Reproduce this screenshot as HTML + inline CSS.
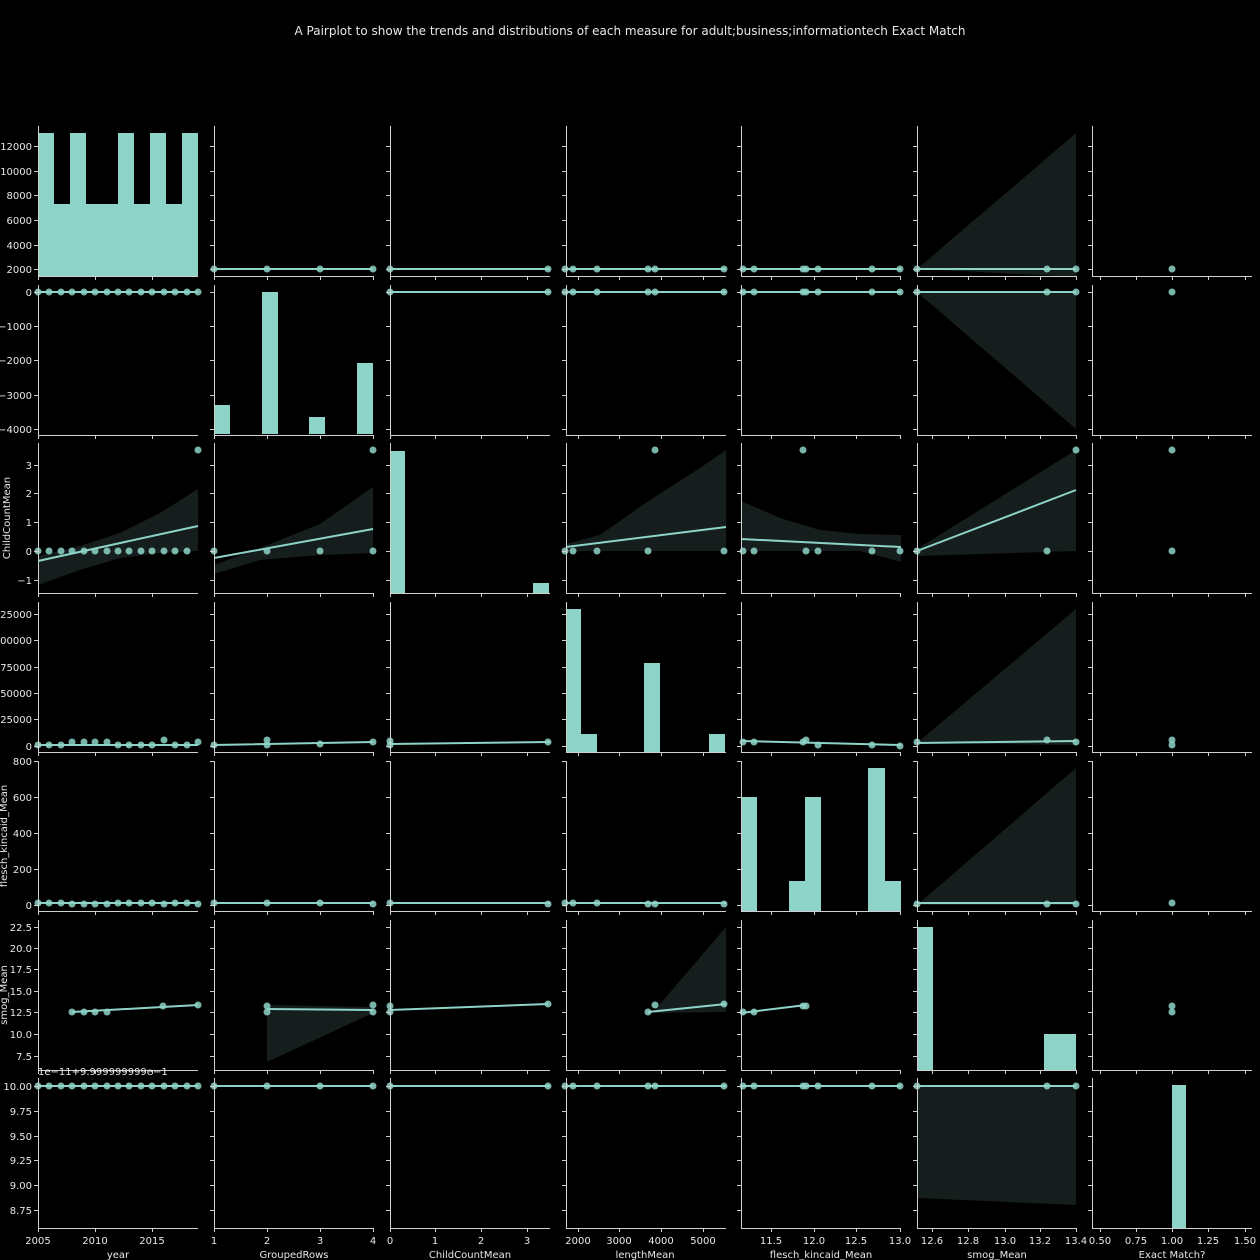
<!DOCTYPE html>
<html><head><meta charset="utf-8"><style>
html,body{margin:0;padding:0;background:#000;}
svg{display:block;}
text{font-family:"DejaVu Sans","Liberation Sans",sans-serif;fill:#e8e8e8;font-size:10px;}
</style></head><body>
<svg width="1260" height="1260" viewBox="0 0 1260 1260" xmlns="http://www.w3.org/2000/svg">
<rect width="1260" height="1260" fill="#000"/>
<defs>
<path id="frame" d="M38.5 126V276.5H198" fill="none" stroke="#d0d0d0" stroke-width="1"/>
<g id="yt0" stroke="#d0d0d0"><path d="M34 146.5h4M34 171.5h4M34 195.5h4M34 220.5h4M34 245.5h4M34 269.5h4"/></g>
<g id="yt1" stroke="#d0d0d0"><path d="M34 292.5h4M34 326.5h4M34 360.5h4M34 395.5h4M34 429.5h4"/></g>
<g id="yt2" stroke="#d0d0d0"><path d="M34 465.5h4M34 493.5h4M34 522.5h4M34 551.5h4M34 580.5h4"/></g>
<g id="yt3" stroke="#d0d0d0"><path d="M34 614.5h4M34 640.5h4M34 667.5h4M34 693.5h4M34 719.5h4M34 746.5h4"/></g>
<g id="yt4" stroke="#d0d0d0"><path d="M34 761.5h4M34 797.5h4M34 833.5h4M34 869.5h4M34 905.5h4"/></g>
<g id="yt5" stroke="#d0d0d0"><path d="M34 927.5h4M34 948.5h4M34 969.5h4M34 991.5h4M34 1012.5h4M34 1034.5h4M34 1056.5h4"/></g>
<g id="yt6" stroke="#d0d0d0"><path d="M34 1086.5h4M34 1111.5h4M34 1136.5h4M34 1160.5h4M34 1185.5h4M34 1210.5h4"/></g>
<g id="xt" stroke="#d0d0d0"><path d="M38.5 276v4M95.5 276v4M152.5 276v4M214.5 276v4M267.5 276v4M320.5 276v4M373.5 276v4M390.5 276v4M435.5 276v4M481.5 276v4M527.5 276v4M578.5 276v4M619.5 276v4M661.5 276v4M703.5 276v4M771.5 276v4M814.5 276v4M856.5 276v4M900.5 276v4M932.5 276v4M968.5 276v4M1005.5 276v4M1040.5 276v4M1076.5 276v4M1100.5 276v4M1136.5 276v4M1172.5 276v4M1208.5 276v4M1245.5 276v4"/></g>
</defs>

<text x="630" y="35" text-anchor="middle" style="font-size:12px">A Pairplot to show the trends and distributions of each measure for adult;business;informationtech Exact Match</text>

<!-- bands -->
<g fill="#161e1d">
<polygon points="917,269 1076,133 1076,276 1060,276"/>
<polygon points="917,292 1076,292 1076,429"/>
<polygon points="38,556 80,546 120,533 160,513 198,489 198,551 160,553 120,558 80,570 38,585"/>
<polygon points="214,565 260,548 320,524 373,487 373,553 320,555 260,560 214,574"/>
<polygon points="566,544 600,535 650,500 700,468 726,450 726,551 600,551 566,551"/>
<polygon points="741,501 780,518 820,530 860,534 901,535 901,562 860,551 741,551 741,540"/>
<polygon points="917,549 1076,450 1076,551 917,556"/>
<polygon points="917,743 1076,609 1076,745"/>
<polygon points="917,905 1076,768 1076,905"/>
<polygon points="267,1005 373,1007 373,1013 267,1062"/>
<polygon points="655,1010 726,927 726,1012 655,1013"/>
<polygon points="917,1086 1076,1086 1076,1205 917,1198"/>
</g>

<!-- histograms -->
<g fill="#8dd3c7">
<path d="M38 276V133H54V204H70V133H86V204H118V133H134V204H150V133H166V204H182V133H198V276Z"/>
<rect x="214" y="405" width="16" height="29"/><rect x="262" y="292" width="16" height="142"/><rect x="309" y="417" width="16" height="17"/><rect x="357" y="363" width="16" height="71"/>
<rect x="390" y="451" width="15" height="142"/><rect x="533" y="583" width="16" height="10"/>
<rect x="566" y="609" width="15" height="143"/><rect x="581" y="734" width="16" height="18"/><rect x="644" y="663" width="16" height="89"/><rect x="709" y="734" width="16" height="18"/>
<rect x="741" y="797" width="16" height="114"/><rect x="789" y="881" width="16" height="30"/><rect x="805" y="797" width="16" height="114"/><rect x="868" y="768" width="17" height="143"/><rect x="885" y="881" width="16" height="30"/>
<rect x="917" y="927" width="16" height="143"/><rect x="1044" y="1034" width="32" height="36"/>
<rect x="1172" y="1085" width="14" height="143"/>
</g>

<!-- regression lines -->
<g stroke="#8dd3c7" stroke-width="2" fill="none">
<path d="M214 269H373M390 269H550M566 269H726M741 269H901M917 269H1076"/>
<path d="M38 292H198M390 292H550M566 292H726M741 292H901M917 292H1076"/>
<path d="M38 561L198 526M214 558L373 529M566 547L726 527M741 539L901 547M917 551L1076 490"/>
<path d="M38 745H198M214 745L373 742M390 744L550 742M917 743L1076 741M741 741L901 745"/>
<path d="M38 903H198M214 903H373M390 903H550M566 903H726M917 903H1076"/>
<path d="M72 1012L198 1005M267 1009L373 1010M390 1010L548 1004M648 1012L726 1004M741 1013L806 1005"/>
<path d="M38 1086H198M214 1086H373M390 1086H550M566 1086H726M741 1086H901M917 1086H1076"/>
</g>

<!-- scatter points -->
<g fill="#8dd3c7" fill-opacity="0.85">
<circle cx="214" cy="269" r="3.5"/><circle cx="267" cy="269" r="3.5"/><circle cx="320" cy="269" r="3.5"/><circle cx="373" cy="269" r="3.5"/>
<circle cx="390" cy="269" r="3.5"/><circle cx="548" cy="269" r="3.5"/>
<circle cx="565" cy="269" r="3.5"/><circle cx="573" cy="269" r="3.5"/><circle cx="597" cy="269" r="3.5"/><circle cx="648" cy="269" r="3.5"/><circle cx="655" cy="269" r="3.5"/><circle cx="724" cy="269" r="3.5"/>
<circle cx="743" cy="269" r="3.5"/><circle cx="754" cy="269" r="3.5"/><circle cx="803" cy="269" r="3.5"/><circle cx="806" cy="269" r="3.5"/><circle cx="818" cy="269" r="3.5"/><circle cx="872" cy="269" r="3.5"/><circle cx="900" cy="269" r="3.5"/>
<circle cx="917" cy="269" r="3.5"/><circle cx="1047" cy="269" r="3.5"/><circle cx="1076" cy="269" r="3.5"/><circle cx="1172" cy="269" r="3.5"/>
<circle cx="38" cy="292" r="3.5"/><circle cx="49" cy="292" r="3.5"/><circle cx="61" cy="292" r="3.5"/><circle cx="72" cy="292" r="3.5"/><circle cx="84" cy="292" r="3.5"/><circle cx="95" cy="292" r="3.5"/><circle cx="107" cy="292" r="3.5"/><circle cx="118" cy="292" r="3.5"/><circle cx="129" cy="292" r="3.5"/><circle cx="141" cy="292" r="3.5"/><circle cx="152" cy="292" r="3.5"/><circle cx="164" cy="292" r="3.5"/><circle cx="175" cy="292" r="3.5"/><circle cx="187" cy="292" r="3.5"/><circle cx="198" cy="292" r="3.5"/>
<circle cx="390" cy="292" r="3.5"/><circle cx="548" cy="292" r="3.5"/>
<circle cx="565" cy="292" r="3.5"/><circle cx="573" cy="292" r="3.5"/><circle cx="597" cy="292" r="3.5"/><circle cx="648" cy="292" r="3.5"/><circle cx="655" cy="292" r="3.5"/><circle cx="724" cy="292" r="3.5"/>
<circle cx="743" cy="292" r="3.5"/><circle cx="754" cy="292" r="3.5"/><circle cx="803" cy="292" r="3.5"/><circle cx="806" cy="292" r="3.5"/><circle cx="818" cy="292" r="3.5"/><circle cx="872" cy="292" r="3.5"/><circle cx="900" cy="292" r="3.5"/>
<circle cx="917" cy="292" r="3.5"/><circle cx="1047" cy="292" r="3.5"/><circle cx="1076" cy="292" r="3.5"/><circle cx="1172" cy="292" r="3.5"/>
<circle cx="38" cy="551" r="3.5"/><circle cx="49" cy="551" r="3.5"/><circle cx="61" cy="551" r="3.5"/><circle cx="72" cy="551" r="3.5"/><circle cx="84" cy="551" r="3.5"/><circle cx="95" cy="551" r="3.5"/><circle cx="107" cy="551" r="3.5"/><circle cx="118" cy="551" r="3.5"/><circle cx="129" cy="551" r="3.5"/><circle cx="141" cy="551" r="3.5"/><circle cx="152" cy="551" r="3.5"/><circle cx="164" cy="551" r="3.5"/><circle cx="175" cy="551" r="3.5"/><circle cx="187" cy="551" r="3.5"/><circle cx="198" cy="450" r="3.5"/>
<circle cx="214" cy="551" r="3.5"/><circle cx="267" cy="551" r="3.5"/><circle cx="320" cy="551" r="3.5"/><circle cx="373" cy="551" r="3.5"/><circle cx="373" cy="450" r="3.5"/>
<circle cx="565" cy="551" r="3.5"/><circle cx="573" cy="551" r="3.5"/><circle cx="597" cy="551" r="3.5"/><circle cx="648" cy="551" r="3.5"/><circle cx="655" cy="450" r="3.5"/><circle cx="724" cy="551" r="3.5"/>
<circle cx="743" cy="551" r="3.5"/><circle cx="754" cy="551" r="3.5"/><circle cx="803" cy="450" r="3.5"/><circle cx="806" cy="551" r="3.5"/><circle cx="818" cy="551" r="3.5"/><circle cx="872" cy="551" r="3.5"/><circle cx="900" cy="551" r="3.5"/>
<circle cx="917" cy="551" r="3.5"/><circle cx="1047" cy="551" r="3.5"/><circle cx="1076" cy="450" r="3.5"/><circle cx="1172" cy="551" r="3.5"/><circle cx="1172" cy="450" r="3.5"/>
<circle cx="38" cy="745" r="3.5"/><circle cx="49" cy="745" r="3.5"/><circle cx="61" cy="745" r="3.5"/><circle cx="72" cy="742" r="3.5"/><circle cx="84" cy="742" r="3.5"/><circle cx="95" cy="742" r="3.5"/><circle cx="107" cy="742" r="3.5"/><circle cx="118" cy="745" r="3.5"/><circle cx="129" cy="745" r="3.5"/><circle cx="141" cy="745" r="3.5"/><circle cx="152" cy="745" r="3.5"/><circle cx="164" cy="740" r="3.5"/><circle cx="175" cy="745" r="3.5"/><circle cx="187" cy="745" r="3.5"/><circle cx="198" cy="742" r="3.5"/>
<circle cx="214" cy="745" r="3.5"/><circle cx="267" cy="740" r="3.5"/><circle cx="267" cy="745" r="3.5"/><circle cx="320" cy="744" r="3.5"/><circle cx="373" cy="742" r="3.5"/>
<circle cx="390" cy="741" r="3.5"/><circle cx="390" cy="745" r="3.5"/><circle cx="548" cy="742" r="3.5"/>
<circle cx="743" cy="742" r="3.5"/><circle cx="754" cy="742" r="3.5"/><circle cx="803" cy="742" r="3.5"/><circle cx="806" cy="740" r="3.5"/><circle cx="818" cy="745" r="3.5"/><circle cx="872" cy="745" r="3.5"/><circle cx="900" cy="746" r="3.5"/>
<circle cx="917" cy="742" r="3.5"/><circle cx="1047" cy="740" r="3.5"/><circle cx="1076" cy="742" r="3.5"/><circle cx="1172" cy="740" r="3.5"/><circle cx="1172" cy="745" r="3.5"/>
<circle cx="38" cy="903" r="3.5"/><circle cx="49" cy="903" r="3.5"/><circle cx="61" cy="903" r="3.5"/><circle cx="72" cy="904" r="3.5"/><circle cx="84" cy="904" r="3.5"/><circle cx="95" cy="904" r="3.5"/><circle cx="107" cy="904" r="3.5"/><circle cx="118" cy="903" r="3.5"/><circle cx="129" cy="903" r="3.5"/><circle cx="141" cy="903" r="3.5"/><circle cx="152" cy="903" r="3.5"/><circle cx="164" cy="904" r="3.5"/><circle cx="175" cy="903" r="3.5"/><circle cx="187" cy="903" r="3.5"/><circle cx="198" cy="904" r="3.5"/>
<circle cx="214" cy="903" r="3.5"/><circle cx="267" cy="903" r="3.5"/><circle cx="320" cy="903" r="3.5"/><circle cx="373" cy="904" r="3.5"/>
<circle cx="390" cy="903" r="3.5"/><circle cx="548" cy="904" r="3.5"/>
<circle cx="565" cy="903" r="3.5"/><circle cx="573" cy="903" r="3.5"/><circle cx="597" cy="903" r="3.5"/><circle cx="648" cy="904" r="3.5"/><circle cx="655" cy="904" r="3.5"/><circle cx="724" cy="904" r="3.5"/>
<circle cx="917" cy="904" r="3.5"/><circle cx="1047" cy="904" r="3.5"/><circle cx="1076" cy="904" r="3.5"/><circle cx="1172" cy="903" r="3.5"/>
<circle cx="72" cy="1012" r="3.5"/><circle cx="84" cy="1012" r="3.5"/><circle cx="95" cy="1012" r="3.5"/><circle cx="107" cy="1012" r="3.5"/><circle cx="163" cy="1006" r="3.5"/><circle cx="198" cy="1005" r="3.5"/>
<circle cx="267" cy="1006" r="3.5"/><circle cx="267" cy="1012" r="3.5"/><circle cx="373" cy="1005" r="3.5"/><circle cx="373" cy="1012" r="3.5"/>
<circle cx="390" cy="1006" r="3.5"/><circle cx="390" cy="1012" r="3.5"/><circle cx="548" cy="1004" r="3.5"/>
<circle cx="648" cy="1012" r="3.5"/><circle cx="655" cy="1005" r="3.5"/><circle cx="724" cy="1004" r="3.5"/>
<circle cx="743" cy="1012" r="3.5"/><circle cx="754" cy="1012" r="3.5"/><circle cx="803" cy="1006" r="3.5"/><circle cx="806" cy="1006" r="3.5"/>
<circle cx="1172" cy="1006" r="3.5"/><circle cx="1172" cy="1012" r="3.5"/>
<circle cx="38" cy="1086" r="3.5"/><circle cx="49" cy="1086" r="3.5"/><circle cx="61" cy="1086" r="3.5"/><circle cx="72" cy="1086" r="3.5"/><circle cx="84" cy="1086" r="3.5"/><circle cx="95" cy="1086" r="3.5"/><circle cx="107" cy="1086" r="3.5"/><circle cx="118" cy="1086" r="3.5"/><circle cx="129" cy="1086" r="3.5"/><circle cx="141" cy="1086" r="3.5"/><circle cx="152" cy="1086" r="3.5"/><circle cx="164" cy="1086" r="3.5"/><circle cx="175" cy="1086" r="3.5"/><circle cx="187" cy="1086" r="3.5"/><circle cx="198" cy="1086" r="3.5"/>
<circle cx="214" cy="1086" r="3.5"/><circle cx="267" cy="1086" r="3.5"/><circle cx="320" cy="1086" r="3.5"/><circle cx="373" cy="1086" r="3.5"/>
<circle cx="390" cy="1086" r="3.5"/><circle cx="548" cy="1086" r="3.5"/>
<circle cx="565" cy="1086" r="3.5"/><circle cx="573" cy="1086" r="3.5"/><circle cx="597" cy="1086" r="3.5"/><circle cx="648" cy="1086" r="3.5"/><circle cx="655" cy="1086" r="3.5"/><circle cx="724" cy="1086" r="3.5"/>
<circle cx="743" cy="1086" r="3.5"/><circle cx="754" cy="1086" r="3.5"/><circle cx="803" cy="1086" r="3.5"/><circle cx="806" cy="1086" r="3.5"/><circle cx="818" cy="1086" r="3.5"/><circle cx="872" cy="1086" r="3.5"/><circle cx="900" cy="1086" r="3.5"/>
<circle cx="917" cy="1086" r="3.5"/><circle cx="1047" cy="1086" r="3.5"/><circle cx="1076" cy="1086" r="3.5"/>
</g>

<g>
<use href="#frame"/><use href="#frame" x="176"/><use href="#frame" x="352"/><use href="#frame" x="528"/><use href="#frame" x="703"/><use href="#frame" x="879"/><use href="#frame" x="1054"/>
<use href="#frame" y="159"/><use href="#frame" x="176" y="159"/><use href="#frame" x="352" y="159"/><use href="#frame" x="528" y="159"/><use href="#frame" x="703" y="159"/><use href="#frame" x="879" y="159"/><use href="#frame" x="1054" y="159"/>
<use href="#frame" y="317"/><use href="#frame" x="176" y="317"/><use href="#frame" x="352" y="317"/><use href="#frame" x="528" y="317"/><use href="#frame" x="703" y="317"/><use href="#frame" x="879" y="317"/><use href="#frame" x="1054" y="317"/>
<use href="#frame" y="476"/><use href="#frame" x="176" y="476"/><use href="#frame" x="352" y="476"/><use href="#frame" x="528" y="476"/><use href="#frame" x="703" y="476"/><use href="#frame" x="879" y="476"/><use href="#frame" x="1054" y="476"/>
<use href="#frame" y="635"/><use href="#frame" x="176" y="635"/><use href="#frame" x="352" y="635"/><use href="#frame" x="528" y="635"/><use href="#frame" x="703" y="635"/><use href="#frame" x="879" y="635"/><use href="#frame" x="1054" y="635"/>
<use href="#frame" y="794"/><use href="#frame" x="176" y="794"/><use href="#frame" x="352" y="794"/><use href="#frame" x="528" y="794"/><use href="#frame" x="703" y="794"/><use href="#frame" x="879" y="794"/><use href="#frame" x="1054" y="794"/>
<use href="#frame" y="952"/><use href="#frame" x="176" y="952"/><use href="#frame" x="352" y="952"/><use href="#frame" x="528" y="952"/><use href="#frame" x="703" y="952"/><use href="#frame" x="879" y="952"/><use href="#frame" x="1054" y="952"/>
</g>
<path d="M1092.5 276.5H1252M1092.5 435.5H1252M1092.5 593.5H1252M1092.5 752.5H1252M1092.5 911.5H1252M1092.5 1070.5H1252M1092.5 1228.5H1252" stroke="#d0d0d0"/>
<g>
<use href="#xt"/><use href="#xt" y="159"/><use href="#xt" y="317"/><use href="#xt" y="476"/><use href="#xt" y="635"/><use href="#xt" y="794"/><use href="#xt" y="952"/>
</g>
<g>
<use href="#yt0"/><use href="#yt0" x="176"/><use href="#yt0" x="352"/><use href="#yt0" x="528"/><use href="#yt0" x="703"/><use href="#yt0" x="879"/><use href="#yt0" x="1054"/>
<use href="#yt1"/><use href="#yt1" x="176"/><use href="#yt1" x="352"/><use href="#yt1" x="528"/><use href="#yt1" x="703"/><use href="#yt1" x="879"/><use href="#yt1" x="1054"/>
<use href="#yt2"/><use href="#yt2" x="176"/><use href="#yt2" x="352"/><use href="#yt2" x="528"/><use href="#yt2" x="703"/><use href="#yt2" x="879"/><use href="#yt2" x="1054"/>
<use href="#yt3"/><use href="#yt3" x="176"/><use href="#yt3" x="352"/><use href="#yt3" x="528"/><use href="#yt3" x="703"/><use href="#yt3" x="879"/><use href="#yt3" x="1054"/>
<use href="#yt4"/><use href="#yt4" x="176"/><use href="#yt4" x="352"/><use href="#yt4" x="528"/><use href="#yt4" x="703"/><use href="#yt4" x="879"/><use href="#yt4" x="1054"/>
<use href="#yt5"/><use href="#yt5" x="176"/><use href="#yt5" x="352"/><use href="#yt5" x="528"/><use href="#yt5" x="703"/><use href="#yt5" x="879"/><use href="#yt5" x="1054"/>
<use href="#yt6"/><use href="#yt6" x="176"/><use href="#yt6" x="352"/><use href="#yt6" x="528"/><use href="#yt6" x="703"/><use href="#yt6" x="879"/><use href="#yt6" x="1054"/>
</g>

<g text-anchor="end">
<text x="32" y="150">12000</text><text x="32" y="175">10000</text><text x="32" y="199">8000</text><text x="32" y="224">6000</text><text x="32" y="249">4000</text><text x="32" y="273">2000</text>
<text x="32" y="296">0</text><text x="32" y="330">−1000</text><text x="32" y="364">−2000</text><text x="32" y="399">−3000</text><text x="32" y="433">−4000</text>
<text x="32" y="469">3</text><text x="32" y="497">2</text><text x="32" y="526">1</text><text x="32" y="555">0</text><text x="32" y="584">−1</text>
<text x="32" y="618">125000</text><text x="32" y="644">100000</text><text x="32" y="671">75000</text><text x="32" y="697">50000</text><text x="32" y="723">25000</text><text x="32" y="750">0</text>
<text x="32" y="765">800</text><text x="32" y="801">600</text><text x="32" y="837">400</text><text x="32" y="873">200</text><text x="32" y="909">0</text>
<text x="32" y="931">22.5</text><text x="32" y="952">20.0</text><text x="32" y="973">17.5</text><text x="32" y="995">15.0</text><text x="32" y="1016">12.5</text><text x="32" y="1038">10.0</text><text x="32" y="1060">7.5</text>
<text x="32" y="1090">10.00</text><text x="32" y="1115">9.75</text><text x="32" y="1140">9.50</text><text x="32" y="1164">9.25</text><text x="32" y="1189">9.00</text><text x="32" y="1214">8.75</text>
</g>
<text x="38" y="1075">1e−11+9.999999999e−1</text>
<text transform="translate(10,518) rotate(-90)" text-anchor="middle">ChildCountMean</text>
<text transform="translate(7,836) rotate(-90)" text-anchor="middle">flesch_kincaid_Mean</text>
<text transform="translate(7,995) rotate(-90)" text-anchor="middle">smog_Mean</text>

<g text-anchor="middle">
<text x="38" y="1244">2005</text><text x="95" y="1244">2010</text><text x="152" y="1244">2015</text>
<text x="214" y="1244">1</text><text x="267" y="1244">2</text><text x="320" y="1244">3</text><text x="373" y="1244">4</text>
<text x="390" y="1244">0</text><text x="435" y="1244">1</text><text x="481" y="1244">2</text><text x="527" y="1244">3</text>
<text x="578" y="1244">2000</text><text x="619" y="1244">3000</text><text x="661" y="1244">4000</text><text x="703" y="1244">5000</text>
<text x="771" y="1244">11.5</text><text x="814" y="1244">12.0</text><text x="856" y="1244">12.5</text><text x="900" y="1244">13.0</text>
<text x="932" y="1244">12.6</text><text x="968" y="1244">12.8</text><text x="1005" y="1244">13.0</text><text x="1040" y="1244">13.2</text><text x="1076" y="1244">13.4</text>
<text x="1100" y="1244">0.50</text><text x="1136" y="1244">0.75</text><text x="1172" y="1244">1.00</text><text x="1208" y="1244">1.25</text><text x="1245" y="1244">1.50</text>
<text x="118" y="1258">year</text><text x="294" y="1258">GroupedRows</text><text x="470" y="1258">ChildCountMean</text><text x="645" y="1258">lengthMean</text><text x="821" y="1258">flesch_kincaid_Mean</text><text x="997" y="1258">smog_Mean</text><text x="1172" y="1258">Exact Match?</text>
</g>
</svg>
</body></html>
